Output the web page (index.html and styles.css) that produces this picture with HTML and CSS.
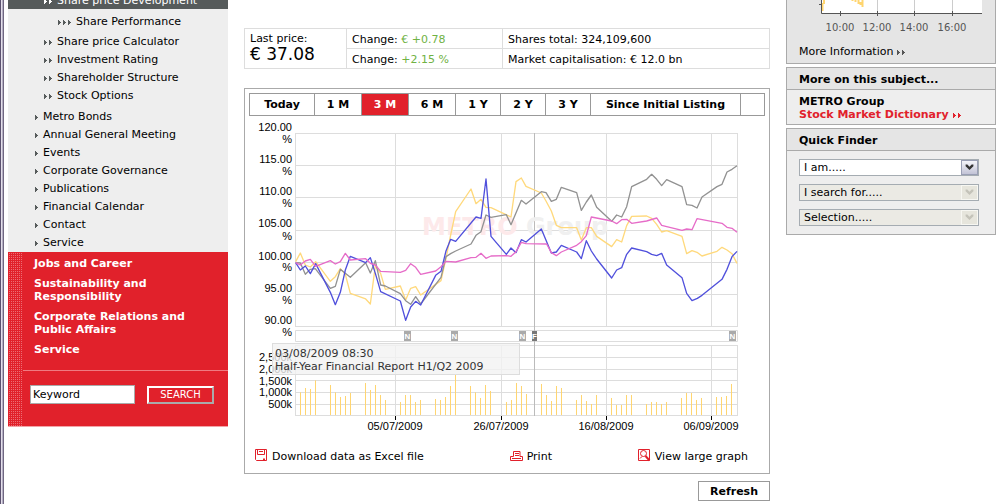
FILE: index.html
```html
<!DOCTYPE html>
<html lang="en">
<head>
<meta charset="utf-8">
<title>METRO Group – Share price Development</title>
<link rel="stylesheet" href="styles.css">
</head>
<body>
<svg class="defs" aria-hidden="true">
  <symbol id="arrow" viewBox="0 0 3 5"><path d="M0 0h1v1h1v1h1v1h-1v1h-1v1h-1z" fill="currentColor"/></symbol>
  <symbol id="arrow2" viewBox="0 0 8 5"><path d="M0 0h1v1h1v1h1v1h-1v1h-1v1h-1zM5 0h1v1h1v1h1v1h-1v1h-1v1h-1z" fill="currentColor"/></symbol>
  <symbol id="arrow3" viewBox="0 0 13 5"><path d="M0 0h1v1h1v1h1v1h-1v1h-1v1h-1zM5 0h1v1h1v1h1v1h-1v1h-1v1h-1zM10 0h1v1h1v1h1v1h-1v1h-1v1h-1z" fill="currentColor"/></symbol>
  <symbol id="chevron" viewBox="0 0 17 15"><path d="M4 4h2l2.500 2.500l2.500-2.500h2v2l-4.500 4.500l-4.500-4.500z" fill="currentColor"/></symbol>
</svg>
<div class="page">
  <div class="sidebar">
    <nav class="menu">
      <div class="current"><a href="#"><svg class="a2"><use href="#arrow2"/></svg>Share price Development</a></div>
      <ul class="level3">
        <li><a href="#"><svg class="a3"><use href="#arrow3"/></svg>Share Performance</a></li>
      </ul>
      <ul class="level2">
        <li><a href="#"><svg class="a2"><use href="#arrow2"/></svg>Share price Calculator</a></li>
        <li><a href="#"><svg class="a2"><use href="#arrow2"/></svg>Investment Rating</a></li>
        <li><a href="#"><svg class="a2"><use href="#arrow2"/></svg>Shareholder Structure</a></li>
        <li><a href="#"><svg class="a2"><use href="#arrow2"/></svg>Stock Options</a></li>
      </ul>
      <ul class="level1">
        <li><a href="#"><svg class="a1"><use href="#arrow"/></svg>Metro Bonds</a></li>
        <li><a href="#"><svg class="a1"><use href="#arrow"/></svg>Annual General Meeting</a></li>
        <li><a href="#"><svg class="a1"><use href="#arrow"/></svg>Events</a></li>
        <li><a href="#"><svg class="a1"><use href="#arrow"/></svg>Corporate Governance</a></li>
        <li><a href="#"><svg class="a1"><use href="#arrow"/></svg>Publications</a></li>
        <li><a href="#"><svg class="a1"><use href="#arrow"/></svg>Financial Calendar</a></li>
        <li><a href="#"><svg class="a1"><use href="#arrow"/></svg>Contact</a></li>
        <li><a href="#"><svg class="a1"><use href="#arrow"/></svg>Service</a></li>
      </ul>
    </nav>
    <div class="redbox">
      <ul class="sections">
        <li><a href="#">Jobs and Career</a></li>
        <li><a href="#">Sustainability and<br>Responsibility</a></li>
        <li><a href="#">Corporate Relations and<br>Public Affairs</a></li>
        <li><a href="#">Service</a></li>
      </ul>
      <form class="search">
        <input type="text" value="Keyword" aria-label="Keyword">
        <button type="button">SEARCH</button>
      </form>
    </div>
  </div>

  <main class="main">
    <table class="quote">
      <tr>
        <td class="last" rowspan="2">Last price:<strong>€ 37.08</strong></td>
        <td class="change">Change: <span class="up">€ +0.78</span></td>
        <td>Shares total: 324,109,600</td>
      </tr>
      <tr>
        <td>Change: <span class="up">+2.15 %</span></td>
        <td>Market capitalisation: € 12.0 bn</td>
      </tr>
    </table>

    <section class="card">
      <div class="tabs">
        <button type="button" class="today">Today</button>
        <button type="button" class="month">1 M</button>
        <button type="button" class="month on">3 M</button>
        <button type="button" class="month">6 M</button>
        <button type="button">1 Y</button>
        <button type="button">2 Y</button>
        <button type="button">3 Y</button>
        <button type="button" class="all">Since Initial Listing</button>
        <span class="rest"></span>
      </div>

      <svg class="chart" viewBox="245 118 524 316" role="img" aria-label="Share price, last 3 months">
        <g class="grid">
          <path d="M295 133.500H738M295 165.500H738M295 197.500H738M295 230.500H738M295 262.500H738M295 294.500H738M295 326.500H738"/>
          <path d="M295.500 133V327M395.500 133V327M501.500 133V327M606.500 133V327M711.500 133V327M737.500 133V327"/>
          <path d="M295.500 330.500H737.500V341.500H295.500Z"/>
          <path d="M295 345.500H738M295 357.500H738M295 369.500H738M295 380.500H738M295 392.500H738M295 404.500H738M295 415.500H738"/>
          <path d="M295.500 345V416M395.500 345V416M501.500 345V416M606.500 345V416M711.500 345V416M737.500 345V416"/>
        </g>
        <path class="marker" d="M534.500 133V416"/>
        <text class="mark" x="422" y="235"><tspan fill="#fde9ea">METRO</tspan> <tspan fill="#f0f0f0">Group</tspan></text>
        <g class="axis end">
          <text x="292" y="131">120.00</text><text x="292" y="143">%</text>
          <text x="292" y="163">115.00</text><text x="292" y="175">%</text>
          <text x="292" y="195">110.00</text><text x="292" y="207">%</text>
          <text x="292" y="227">105.00</text><text x="292" y="240">%</text>
          <text x="292" y="260">100.00</text><text x="292" y="271">%</text>
          <text x="292" y="292">95.00</text><text x="292" y="304">%</text>
          <text x="292" y="324">90.00</text><text x="292" y="336">%</text>
          <text x="292" y="361">2,500k</text><text x="292" y="373">2,000k</text>
          <text x="292" y="385">1,500k</text><text x="292" y="396">1,000k</text>
          <text x="292" y="408">500k</text>
        </g>
        <g class="series" transform="translate(245 115) scale(.33333)">
          <polyline stroke="#ffd97c" points="152,440 166,414 181,450 196,456 212,440 256,499 271,485 286,461 301,478 316,535 362,552 376,567 391,452 407,476 421,523 466,513 482,555 497,520 512,515 527,540 588,497 603,430 617,360 632,290 678,222 693,266 708,253 723,277 738,278 798,306 813,200 829,189 843,214 889,234 903,258 919,288 934,331 949,338 995,338 1009,375 1024,338 1039,338 1055,364 1100,395 1115,374 1130,381 1145,332 1160,304 1205,303 1220,310 1235,328 1250,351 1265,347 1311,364 1325,416 1341,407 1356,412 1371,423 1416,409 1431,397 1446,405 1461,416 1476,445"/>
          <polyline stroke="#929292" points="152,443 166,444 181,478 196,463 211,461 256,520 271,514 286,463 316,487 362,443 376,474 391,437 407,510 421,513 466,536 482,557 497,568 512,545 527,567 588,487 603,425 617,416 632,408 678,387 693,361 708,350 723,300 738,307 784,299 798,329 829,256 843,267 889,230 903,233 919,259 934,253 949,217 995,233 1009,286 1024,261 1039,240 1055,277 1100,319 1115,300 1130,306 1145,275 1160,215 1205,193 1220,178 1235,193 1250,212 1265,194 1311,215 1325,269 1341,271 1356,279 1371,246 1416,215 1431,208 1446,171 1461,163 1476,152"/>
          <polyline stroke="#5050dc" points="152,443 166,465 181,453 196,476 212,446 256,532 271,569 286,532 301,465 316,424 362,443 376,428 391,475 407,530 466,558 482,616 497,576 512,559 527,570 572,481 588,469 603,408 617,373 632,379 693,306 708,310 723,192 738,364 784,418 798,399 813,413 829,374 843,381 889,342 919,414 934,411 949,391 995,411 1009,431 1024,377 1039,408 1055,432 1100,489 1115,465 1130,458 1145,418 1160,399 1205,410 1220,418 1235,422 1250,415 1265,450 1311,488 1325,535 1341,557 1357,550 1371,541 1431,493 1446,463 1461,425 1476,409"/>
          <polyline stroke="#e66cc8" points="152,443 166,450 181,438 196,433 212,454 256,437 271,447 286,440 301,415 316,435 362,431 376,445 391,450 407,469 466,472 482,466 497,446 512,457 527,478 572,468 588,455 603,439 632,441 678,428 693,427 708,415 723,430 738,423 784,422 798,424 813,410 829,382 843,386 905,387 919,413 934,422 949,411 995,391 1009,380 1024,362 1039,306 1100,318 1115,326 1130,314 1145,313 1160,325 1205,318 1235,309 1250,331 1311,346 1325,342 1341,344 1356,311 1431,325 1446,337 1461,340 1476,352"/>
        </g>
        <g class="volume" transform="translate(245 325) scale(.33333)">
          <path d="M166.500 202V270M181.500 189V270M196.500 192V270M211.500 166V270M256.500 180V270M271.500 202V270M286.500 216V270M301.500 213V270M316.500 204V270M361.500 174V270M376.500 195V270M391.500 180V270M406.500 210V270M421.500 225V270M466.500 231V270M481.500 210V270M496.500 210V270M511.500 231V270M526.500 225V270M571.500 222V270M586.500 225V270M601.500 216V270M616.500 183V270M631.500 148V270M676.500 183V270M691.500 202V270M706.500 219V270M721.500 180V270M736.500 198V270M784.500 231V270M799.500 225V270M814.500 174V270M829.500 183V270M844.500 207V270M889.500 177V270M904.500 210V270M919.500 228V270M934.500 183V270M949.500 189V270M994.500 225V270M1009.500 210V270M1024.500 228V270M1039.500 237V270M1054.500 210V270M1099.500 219V270M1114.500 240V270M1129.500 240V270M1144.500 210V270M1159.500 210V270M1204.500 237V270M1219.500 231V270M1234.500 231V270M1249.500 237V270M1264.500 231V270M1309.500 219V270M1324.500 204V270M1339.500 204V270M1354.500 225V270M1369.500 219V270M1414.500 216V270M1429.500 216V270M1444.500 213V270M1459.500 177V270"/>
        </g>
        <g class="flags">
          <rect x="404" y="331" width="7" height="10"/><text x="407.500" y="339">N</text>
          <rect x="451" y="331" width="7" height="10"/><text x="454.500" y="339">N</text>
          <rect x="519" y="331" width="7" height="10"/><text x="522.500" y="339">N</text>
          <rect class="dark" x="532" y="331" width="5" height="10"/><text x="534.500" y="339">F</text>
          <rect x="729" y="331" width="7" height="10"/><text x="732.500" y="339">N</text>
        </g>
        <path class="ticks" d="M395.500 416V420M501.500 416V420M606.500 416V420M711.500 416V420"/>
        <g class="axis mid">
          <text x="395" y="430">05/07/2009</text><text x="501" y="430">26/07/2009</text>
          <text x="606" y="430">16/08/2009</text><text x="711" y="430">06/09/2009</text>
        </g>
        <g class="tip">
          <rect x="272.500" y="343.500" width="247" height="31"/>
          <text x="275" y="357">03/08/2009 08:30</text>
          <text x="275" y="370">Half-Year Financial Report H1/Q2 2009</text>
        </g>
      </svg>

      <div class="tools">
        <a href="#"><svg class="icon" viewBox="0 0 13 13" fill="none" stroke="#e1212b"><path d="M.5.500h11v11h-10l-1-1zM2.500.500v5h7v-5M4 2.500h4" /><path d="M8 9.500h2v2h-2z" fill="#e1212b" stroke="none"/></svg>Download data as Excel file</a>
        <a href="#"><svg class="icon" viewBox="0 0 13 13" fill="none" stroke="#e1212b"><path d="M3.500 7.500v-5h6.500v5M5 4.500h4M5 6.500h4M3.500 7.500h-3v4h12v-4h-2.500M2 9.500h9"/></svg>Print</a>
        <a href="#"><svg class="icon" viewBox="0 0 13 13" fill="none" stroke="#e1212b"><path d="M.5.500h11v11h-11z"/><circle cx="5.500" cy="4.500" r="3"/><path d="M7.500 7l4 4.500" stroke-width="2"/><path d="M2 9.500l2-2"/></svg>View large graph</a>
      </div>
    </section>
    <button type="button" class="refresh">Refresh</button>
  </main>

  <aside class="aside">
    <section class="panel today-panel">
      <svg class="mini" viewBox="787 0 208 34" role="img" aria-label="Share price today">
        <rect x="822" y="0" width="160" height="13" fill="#fff"/>
        <path d="M877.500 0V13M914.500 0V13M952.500 0V13" stroke="#ccc"/>
        <path d="M822.500 11V3M824 0v4M852.500 0v1M855.500 0v2M858.500 0v4M860.500 2v3M862.500 0v7" stroke="#ffd56f" stroke-width="2" fill="none"/>
        <path d="M821.500 0V13.500H982M819 4.500h2M840.500 11V16M877.500 11V16M914.500 11V16M952.500 11V16" stroke="#555" fill="none"/>
        <g><text x="840" y="31">10:00</text><text x="877" y="31">12:00</text><text x="914" y="31">14:00</text><text x="952" y="31">16:00</text></g>
      </svg>
      <a class="more" href="#">More Information<svg class="a2"><use href="#arrow2"/></svg></a>
    </section>
    <section class="panel">
      <h2>More on this subject...</h2>
      <div class="links">
        <strong>METRO Group</strong>
        <a class="red" href="#">Stock Market Dictionary<svg class="a2"><use href="#arrow2"/></svg></a>
      </div>
    </section>
    <section class="panel">
      <h2>Quick Finder</h2>
      <form class="finder">
        <div class="pick"><select aria-label="I am"><option>I am.....</option></select><svg class="chev"><use href="#chevron"/></svg></div>
        <div class="pick off"><select aria-label="I search for" disabled><option>I search for.....</option></select><svg class="chev"><use href="#chevron"/></svg></div>
        <div class="pick off"><select aria-label="Selection" disabled><option>Selection.....</option></select><svg class="chev"><use href="#chevron"/></svg></div>
      </form>
    </section>
  </aside>
</div>
</body>
</html>
```
FILE: styles.css
```css
* { box-sizing: border-box; }
body {
  margin: 0;
  background: #fff;
  color: #000;
  font: 11px/13px "DejaVu Sans", Verdana, sans-serif;
}
a { color: inherit; text-decoration: none; }
ul { margin: 0; padding: 0; list-style: none; }
button, input, select { font: inherit; color: inherit; }
.defs { position: absolute; width: 0; height: 0; }
.a1 { width: 3px; height: 5px; }
.a2 { width: 8px; height: 5px; }
.a3 { width: 13px; height: 5px; }

.page {
  display: grid;
  grid-template-columns: 220px minmax(0, 1fr) 210px;
  gap: 16px;
  align-items: start;
  min-height: 100vh;
  padding: 0 11px 0 8px;
  background: linear-gradient(90deg, #5c5270 1px, #e4e0ea 1px 2px, #b5aec4 2px 3px, #6f6780 3px 4px, #fff 4px);
}

/* Left navigation */
.menu { background: #eee; padding-bottom: 1px; }
.menu a { display: flex; align-items: center; gap: 5px; height: 18px; }
.menu svg { color: #565b5b; flex: none; margin-top: 2px; }
.current {
  display: flex;
  align-items: flex-end;
  height: 9px;
  overflow: hidden;
  padding-left: 36px;
  background: #565b5b;
  color: #fff;
}
.menu .current svg { color: #fff; }
.level3 { padding: 3px 0 2px 50px; }
.level2 { padding: 0 0 3px 36px; }
.level1 { padding-left: 27px; }

.redbox {
  padding-left: 15px;
  background:
    linear-gradient(90deg, transparent 15px, #e1212b 15px),
    linear-gradient(90deg, #e1212b 1px, transparent 1px) 0 0 / 2px 2px,
    linear-gradient(#e1212b 1px, #ec6d74 1px) 0 0 / 2px 2px;
  border-bottom: 1px solid #f3a3a7;
  color: #fff;
}
.sections { padding: 5px 10px 14px 11px; font-weight: bold; }
.sections li + li { margin-top: 7px; }
.sections a { display: block; }
.search {
  display: flex;
  align-items: center;
  gap: 12px;
  padding: 14px 14px 22px 7px;
  border-top: 1px solid #ef7b81;
}
.search input {
  width: 105px;
  height: 19px;
  padding: 0 2px;
  border: 1px solid #aaa;
  border-radius: 0;
  background: #fff;
  color: #000;
}
.search button {
  width: 67px;
  height: 18px;
  padding: 0;
  border: 2px solid;
  border-color: #fff #aaa #aaa #fff;
  background: #e1212b;
  color: #fff;
  font-size: 10px;
}

/* Quote and chart */
.main { display: flex; flex-direction: column; padding-top: 28px; }
.quote { width: 100%; border-collapse: collapse; line-height: 13px; }
.quote td { height: 20px; padding: 3px 5px 2px; border: 1px solid #ddd; }
.quote .last { width: 102px; vertical-align: top; }
.quote .change { width: 156px; }
.quote strong { display: block; font-size: 17px; font-weight: normal; line-height: 18px; }
.up { color: #6fb244; }

.card { margin-top: 19px; border: 1px solid #aaa; }
.tabs { display: flex; margin: 4px 4px 0; border: 1px solid #999; }
.tabs button {
  flex: none;
  width: 45px;
  height: 21px;
  padding: 0;
  border: 0;
  border-right: 1px solid #999;
  background: #fff;
  font-weight: bold;
}
.tabs .today { width: 65px; }
.tabs .month { width: 47px; }
.tabs .all { width: 150px; }
.tabs .on { background: #e1212b; color: #fff; }

.chart { display: block; width: 100%; height: auto; margin-top: 2px; }
.grid path { fill: none; stroke: #ddd; }
.marker { stroke: #bbb; }
.mark { font: bold 24px "DejaVu Sans", sans-serif; }
.axis { font: 11px "Liberation Sans", Arial, sans-serif; }
.end { text-anchor: end; }
.mid { text-anchor: middle; }
.series polyline { fill: none; stroke-width: 4; stroke-linejoin: round; }
.volume path { stroke: #ffd56f; stroke-width: 3; }
.ticks { stroke: #000; }
.flags rect { fill: #aaa; }
.flags .dark { fill: #777; }
.flags text { font: bold 8px "Liberation Sans", Arial, sans-serif; fill: #fff; text-anchor: middle; }
.tip rect { fill: #f2f2f2; fill-opacity: .8; stroke: #ddd; }
.tip text { fill: #333; }

.tools { display: flex; justify-content: space-between; padding: 15px 21px 9px 10px; }
.tools a { display: flex; align-items: center; gap: 4px; height: 15px; }
.icon { width: 13px; height: 13px; margin-bottom: 2px; }
.refresh {
  align-self: flex-end;
  width: 72px;
  height: 20px;
  margin-top: 7px;
  padding: 0;
  border: 1px solid #999;
  background: #fff;
  font-weight: bold;
}

/* Right column */
.panel { margin-bottom: 3px; border: 1px solid #aaa; background: #eee; }
.panel h2 {
  margin: 0;
  padding: 5px 12px 3px;
  border-bottom: 1px solid #aaa;
  background: #e5e5e5;
  font-size: 11px;
  line-height: 13px;
}
.panel .a2 { margin-left: 4px; }
.today-panel { border-top: 0; background: #e5e5e5; }
.mini { display: block; width: 100%; height: auto; }
.mini text { font-size: 10px; fill: #555; text-anchor: middle; }
.more { display: block; padding: 11px 12px 5px; color: #000; }
.more .a2 { color: #555; }
.links { display: flex; flex-direction: column; padding: 5px 12px 3px; font-weight: bold; }
.red { color: #e1212b; white-space: nowrap; }
.finder { display: flex; flex-direction: column; gap: 8px; padding: 8px 16px 8px 12px; }
.pick { position: relative; height: 17px; color: #000; }
.pick select {
  display: block;
  width: 100%;
  height: 17px;
  padding: 0 20px 0 4px;
  border: 1px solid #a5acb2;
  border-radius: 0;
  background: #fff;
  appearance: none;
  opacity: 1;
  color: #000;
}
.chev {
  position: absolute;
  top: 1px;
  right: 1px;
  width: 17px;
  height: 15px;
  border: 1px solid #9a9fb5;
  background: linear-gradient(#f5f5fa, #c2c3d6);
  color: #333;
  pointer-events: none;
}
.off select { background: #ebeae4; }
.off .chev { border-color: #f7f7f2; background: #e6e5dc; color: #c4c3b9; }
```
